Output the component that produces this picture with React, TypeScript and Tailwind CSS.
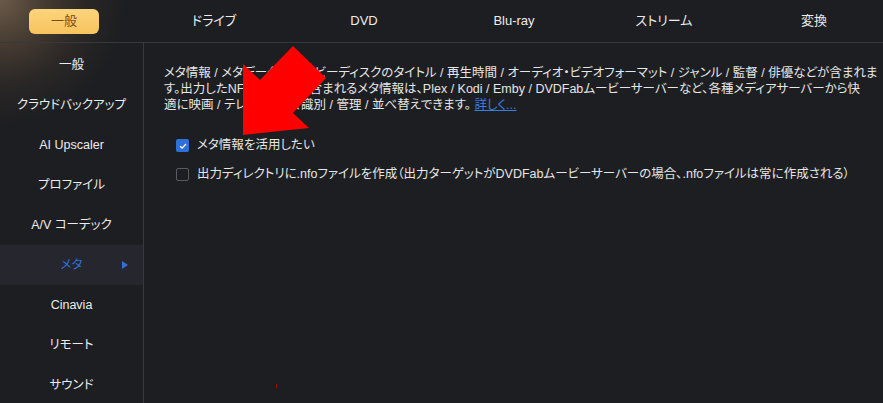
import { useState } from "react";

const TABS = ["一般", "ドライブ", "DVD", "Blu-ray", "ストリーム", "変換"];
const MENU = [
  "一般",
  "クラウドバックアップ",
  "AI Upscaler",
  "プロファイル",
  "A/V コーデック",
  "メタ",
  "Cinavia",
  "リモート",
  "サウンド",
];

const font = "font-['Liberation_Sans','Noto_Sans_CJK_JP',sans-serif] [font-feature-settings:'palt']";

const Checkbox = ({ checked, label, onClick }: { checked: boolean; label: string; onClick: () => void }) => (
  <label className="flex h-[29px] cursor-pointer items-center gap-[8px] pl-[12px]" onClick={onClick}>
    {checked ? (
      <span className="flex h-[13px] w-[13px] shrink-0 items-center justify-center rounded-[2px] bg-[#2f6fd8]">
        <svg viewBox="0 0 12 12" className="h-[10px] w-[10px]">
          <path d="M2.5 6.2 5 8.5 9.6 3.6" fill="none" stroke="#fff" strokeWidth="1.6" />
        </svg>
      </span>
    ) : (
      <span className="h-[13px] w-[13px] shrink-0 rounded-[2px] border border-[#5a5b60]" />
    )}
    <span className="whitespace-nowrap text-[12.5px] text-[#e6e6e6]">{label}</span>
  </label>
);

export default function App() {
  const [tab, setTab] = useState(0);
  const [menu, setMenu] = useState(5);
  const [useMeta, setUseMeta] = useState(true);
  const [nfo, setNfo] = useState(false);

  return (
    <div
      className={`relative h-[403px] w-[883px] overflow-hidden bg-[#1d1e21] bg-[radial-gradient(circle_at_0_0,#6b5a48_0px,#453b31_45px,#2a2726_85px,#1d1e21_125px)] ${font}`}
    >
      {/* tabs */}
      <div className="flex h-[43px] items-center border-b border-[#38393d]">
        <div className="-ml-[11px] flex">
          {TABS.map((t, i) => (
            <div key={t} className="flex w-[150px] justify-center">
              <button
                onClick={() => setTab(i)}
                className={
                  i === tab
                    ? "h-[25px] w-[70px] rounded-[6px] bg-gradient-to-b from-[#fdd47c] to-[#f7c35e] text-[13px] text-[#7a4a12]"
                    : "h-[25px] px-2 text-[13px] text-[#ececec]"
                }
              >
                {t}
              </button>
            </div>
          ))}
        </div>
      </div>

      <div className="flex h-[360px]">
        {/* sidebar */}
        <div className="w-[144px] shrink-0 border-r border-[#38393d] pt-[2px]">
          {MENU.map((m, i) => (
            <button
              key={m}
              onClick={() => setMenu(i)}
              className={`relative flex h-[40px] w-full items-center justify-center text-[12.5px] ${
                i === menu ? "bg-[#26262e] text-[#2f6fd8]" : "text-[#ececec]"
              }`}
            >
              {m}
              {i === menu && (
                <svg viewBox="0 0 6 8" className="absolute left-[122px] top-[16px] h-[8px] w-[6px]">
                  <path d="M0 0 6 4 0 8Z" fill="#2f6fd8" />
                </svg>
              )}
            </button>
          ))}
        </div>

        {/* content */}
        <div className="min-w-0 flex-1 overflow-hidden pl-[20px] pt-[22px]">
          <p className="whitespace-nowrap text-[12.5px] leading-[16px] text-[#e6e6e6]">
            メタ情報 / メタデータはムービーディスクのタイトル / 再生時間 / オーディオ・ビデオフォーマット / ジャンル / 監督 / 俳優などが含まれま
            <br />
            す。出力したNFOファイルに含まれるメタ情報は、Plex / Kodi / Emby / DVDFabムービーサーバーなど、各種メディアサーバーから快
            <br />
            適に映画 / テレビの検出、識別 / 管理 / 並べ替えできます。{" "}
            <a href="#" className="text-[#3a7fe0] underline">
              詳しく...
            </a>
          </p>
          <div className="mt-[18px]">
            <Checkbox checked={useMeta} label="メタ情報を活用したい" onClick={() => setUseMeta(!useMeta)} />
            <Checkbox
              checked={nfo}
              label="出力ディレクトリに.nfoファイルを作成（出力ターゲットがDVDFabムービーサーバーの場合、.nfoファイルは常に作成される）"
              onClick={() => setNfo(!nfo)}
            />
          </div>
        </div>
      </div>

      {/* annotation arrow */}
      <svg viewBox="0 0 84 90" className="pointer-events-none absolute left-[243px] top-[46px] h-[90px] w-[84px]">
        <polygon points="0,89 0,18 17,34 50,0 83,32 50,67 66,82" fill="#ff0000" />
      </svg>
      <span className="absolute left-[276px] top-[384px] h-[4px] w-[1px] bg-[#b00000]" />
    </div>
  );
}
